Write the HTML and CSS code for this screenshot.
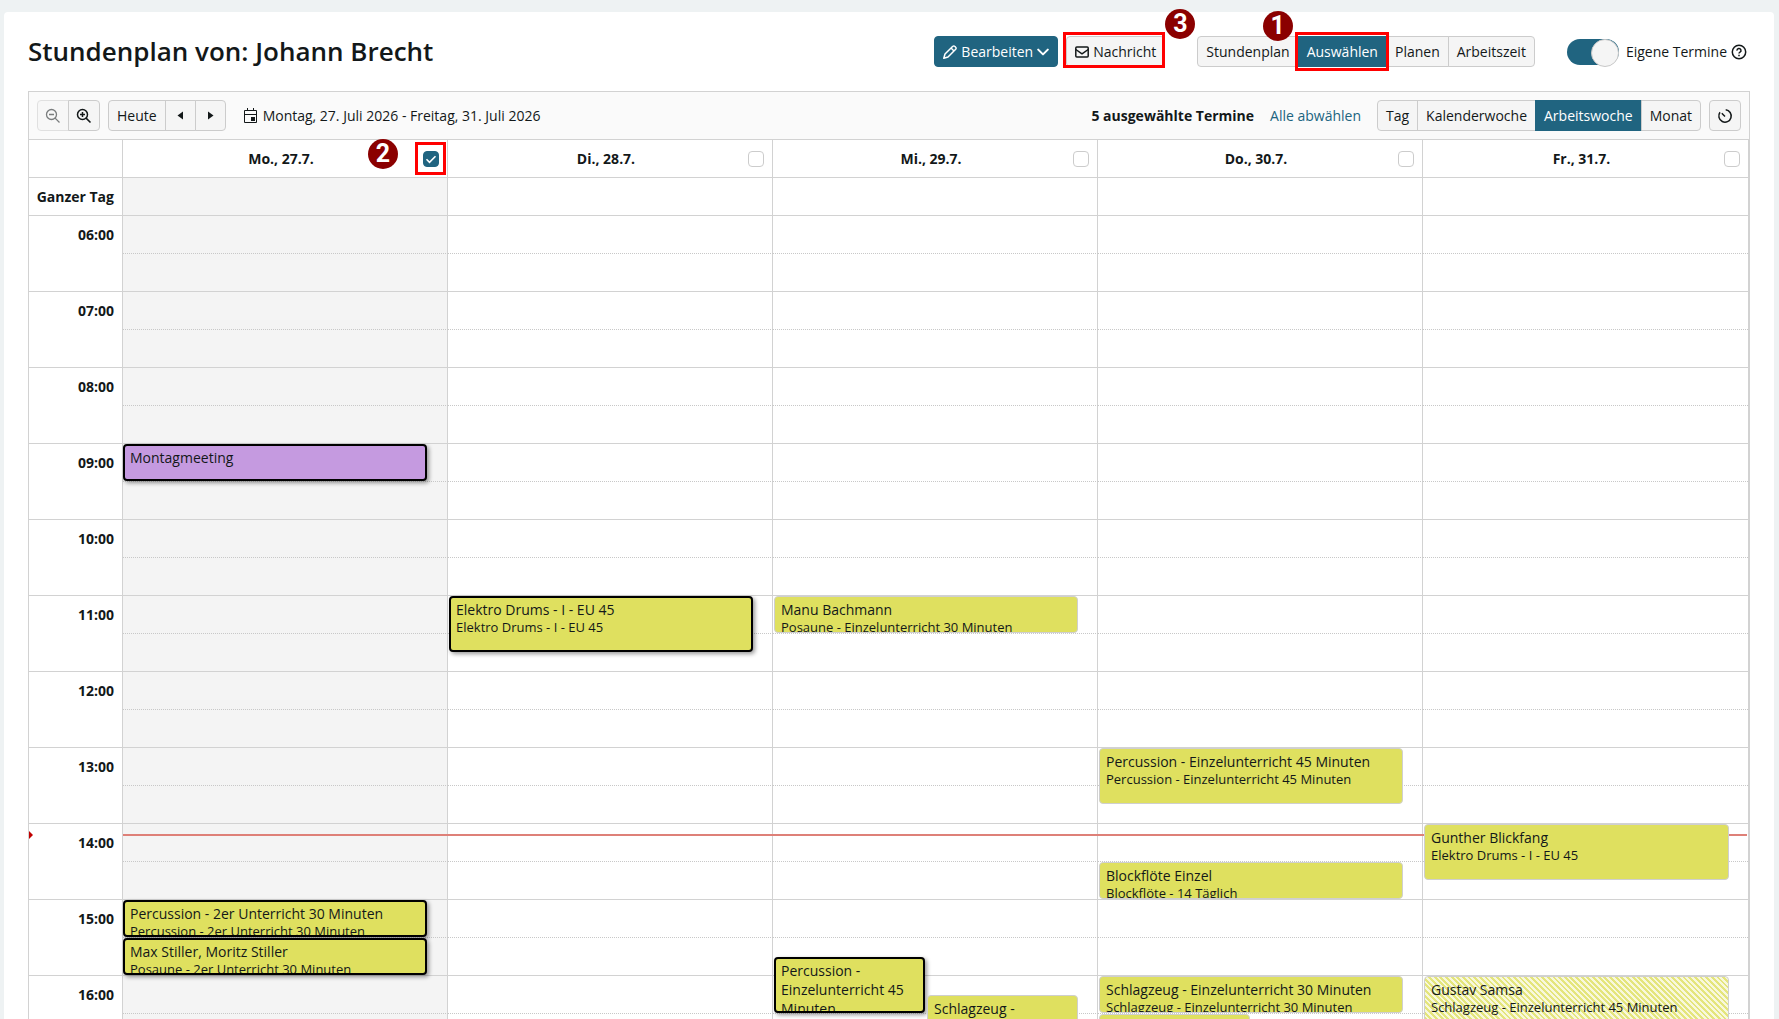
FILE: index.html
```html
<!DOCTYPE html>
<html lang="de">
<head>
<meta charset="utf-8">
<meta name="viewport" content="width=device-width, initial-scale=1">
<title>Stundenplan von: Johann Brecht</title>
<link rel="stylesheet" href="styles.css">
</head>
<body>
<main class="panel">
  <header class="page-head">
    <h1 class="title">Stundenplan von: Johann Brecht</h1>
    <div class="head-actions">
      <div class="action-pair">
        <button class="btn btn-primary" type="button">
          <svg class="icon-label" viewBox="1 1 14 14" fill="none" stroke="currentColor" stroke-width="1.500" stroke-linejoin="round"><path d="M1.800 14.200l1.200-4.200L10.800 2.300a1.300 1.300 0 0 1 1.900 0l1 1a1.300 1.300 0 0 1 0 1.900L6 13z"/><path d="M9.500 3.500l3 3-1 1-3-3z" fill="currentColor" stroke="none"/></svg>
          <span>Bearbeiten</span>
          <svg class="icon-caret" viewBox="1 1 10 10" fill="none" stroke="currentColor" stroke-width="1.700" stroke-linecap="round" stroke-linejoin="round"><path d="M2 4l4 4 4-4"/></svg>
        </button>
        <div class="marked mark-message">
          <button class="btn" type="button">
            <svg class="icon-label" viewBox="1 1 14 14" fill="none" stroke="currentColor" stroke-width="1.500" stroke-linejoin="round"><rect x="1.800" y="3" width="12.400" height="10" rx="1"/><path d="M1.800 5.500L8 9.800l6.200-4.300"/></svg>
            <span>Nachricht</span>
          </button>
          <span class="badge badge-right">3</span>
        </div>
      </div>
      <div class="group">
        <button class="btn" type="button">Stundenplan</button>
        <div class="marked mark-select">
          <button class="btn btn-primary" type="button">Auswählen</button>
          <span class="badge badge-left">1</span>
        </div>
        <button class="btn" type="button">Planen</button>
        <button class="btn" type="button">Arbeitszeit</button>
      </div>
      <div class="own">
        <input class="switch" type="checkbox" id="own" role="switch" checked>
        <label for="own">Eigene Termine</label>
        <svg class="icon" viewBox="0 0 16 16" fill="none" stroke="currentColor" stroke-width="1.500"><circle cx="8" cy="8" r="6.700"/><path d="M6 6.600a2 2 0 1 1 3 1.600c-.7.400-1 .7-1 1.300"/><path d="M8 10.700v1.500"/></svg>
      </div>
    </div>
  </header>

  <section class="calendar">
    <div class="toolbar">
      <div class="tool-left">
        <div class="group">
          <button class="btn btn-icon" type="button" aria-label="Verkleinern" disabled><svg class="icon" viewBox="0 0 16 16" fill="none" stroke="currentColor" stroke-width="1.300"><circle cx="6.500" cy="6.500" r="5"/><path d="M4 6.500h5M10.100 10.100l4.400 4.400"/></svg></button>
          <button class="btn btn-icon" type="button" aria-label="Vergrößern"><svg class="icon" viewBox="0 0 16 16" fill="none" stroke="currentColor" stroke-width="1.500"><circle cx="6.500" cy="6.500" r="5"/><path d="M4 6.500h5M6.500 4v5M10.100 10.100l4.400 4.400"/></svg></button>
        </div>
        <div class="group">
          <button class="btn" type="button">Heute</button>
          <button class="btn btn-icon" type="button" aria-label="Zurück"><svg class="icon-arrow" viewBox="0 0 15 15" fill="currentColor"><path d="M10 3.500v8L4.500 7.500z"/></svg></button>
          <button class="btn btn-icon" type="button" aria-label="Weiter"><svg class="icon-arrow" viewBox="0 0 15 15" fill="currentColor"><path d="M5 3.500v8l5.500-4z"/></svg></button>
        </div>
        <button class="range" type="button">
          <svg class="icon" viewBox="0 0 16 16" fill="none" stroke="currentColor"><path d="M1.500 2.500h12v12h-12zM1.500 6.500h12M4.500 0v3M10.500 0v3"/><path d="M9 9h3v4H8V9z" fill="currentColor" stroke="none"/></svg>
          <span>Montag, 27. Juli 2026 - Freitag, 31. Juli 2026</span>
        </button>
      </div>
      <div class="tool-right">
        <strong>5 ausgewählte Termine</strong>
        <a class="link" href="#">Alle abwählen</a>
        <div class="tool-views">
          <div class="group">
            <button class="btn" type="button">Tag</button>
            <button class="btn" type="button">Kalenderwoche</button>
            <button class="btn btn-primary" type="button">Arbeitswoche</button>
            <button class="btn" type="button">Monat</button>
          </div>
          <button class="btn btn-icon" type="button" aria-label="Arbeitszeit anzeigen"><svg class="icon" viewBox="0 0 16 16" fill="none" stroke="currentColor" stroke-width="1.500"><path d="M8.700 1.800A6.200 6.200 0 1 1 3 4.300M8 8.500L4.800 5.300"/></svg></button>
        </div>
      </div>
    </div>

    <div class="grid">
      <table class="week">
        <colgroup><col class="col-time"><col><col><col><col><col></colgroup>
        <thead>
          <tr>
            <td></td>
            <th scope="col"><div class="day-head"><label for="d1">Mo., 27.7.</label><span class="marked mark-day"><input class="check" type="checkbox" id="d1" checked><span class="badge badge-day">2</span></span></div></th>
            <th scope="col"><div class="day-head"><label for="d2">Di., 28.7.</label><input class="check" type="checkbox" id="d2"></div></th>
            <th scope="col"><div class="day-head"><label for="d3">Mi., 29.7.</label><input class="check" type="checkbox" id="d3"></div></th>
            <th scope="col"><div class="day-head"><label for="d4">Do., 30.7.</label><input class="check" type="checkbox" id="d4"></div></th>
            <th scope="col"><div class="day-head"><label for="d5">Fr., 31.7.</label><input class="check" type="checkbox" id="d5"></div></th>
          </tr>
        </thead>
        <tbody>
          <tr class="full"><th scope="row">Ganzer Tag</th><td class="picked"></td><td></td><td></td><td></td><td></td></tr>

          <tr class="half"><th scope="row" rowspan="2">06:00</th><td class="picked"></td><td></td><td></td><td></td><td></td></tr>
          <tr class="full"><td class="picked"></td><td></td><td></td><td></td><td></td></tr>

          <tr class="half"><th scope="row" rowspan="2">07:00</th><td class="picked"></td><td></td><td></td><td></td><td></td></tr>
          <tr class="full"><td class="picked"></td><td></td><td></td><td></td><td></td></tr>

          <tr class="half"><th scope="row" rowspan="2">08:00</th><td class="picked"></td><td></td><td></td><td></td><td></td></tr>
          <tr class="full"><td class="picked"></td><td></td><td></td><td></td><td></td></tr>

          <tr class="half"><th scope="row" rowspan="2">09:00</th><td class="picked"><article class="event len-30 meeting selected"><h2>Montagmeeting</h2></article></td><td></td><td></td><td></td><td></td></tr>
          <tr class="full"><td class="picked"></td><td></td><td></td><td></td><td></td></tr>

          <tr class="half"><th scope="row" rowspan="2">10:00</th><td class="picked"></td><td></td><td></td><td></td><td></td></tr>
          <tr class="full"><td class="picked"></td><td></td><td></td><td></td><td></td></tr>

          <tr class="half"><th scope="row" rowspan="2">11:00</th><td class="picked"></td>
            <td><article class="event len-45 selected"><h2>Elektro Drums - I - EU 45</h2><p>Elektro Drums - I - EU 45</p></article></td>
            <td><article class="event len-30"><h2>Manu Bachmann</h2><p>Posaune - Einzelunterricht 30 Minuten</p></article></td>
            <td></td><td></td></tr>
          <tr class="full"><td class="picked"></td><td></td><td></td><td></td><td></td></tr>

          <tr class="half"><th scope="row" rowspan="2">12:00</th><td class="picked"></td><td></td><td></td><td></td><td></td></tr>
          <tr class="full"><td class="picked"></td><td></td><td></td><td></td><td></td></tr>

          <tr class="half"><th scope="row" rowspan="2">13:00</th><td class="picked"></td><td></td><td></td>
            <td><article class="event len-45"><h2>Percussion - Einzelunterricht 45 Minuten</h2><p>Percussion - Einzelunterricht 45 Minuten</p></article></td>
            <td></td></tr>
          <tr class="full"><td class="picked"></td><td></td><td></td><td></td><td></td></tr>

          <tr class="half"><th scope="row" rowspan="2">14:00</th><td class="picked"></td><td></td><td></td><td></td>
            <td><article class="event len-45"><h2>Gunther Blickfang</h2><p>Elektro Drums - I - EU 45</p></article></td></tr>
          <tr class="full"><td class="picked"></td><td></td><td></td>
            <td><article class="event len-30"><h2>Blockflöte Einzel</h2><p>Blockflöte - 14 Täglich</p></article></td>
            <td></td></tr>

          <tr class="half"><th scope="row" rowspan="2">15:00</th>
            <td class="picked"><article class="event len-30 selected"><h2>Percussion - 2er Unterricht 30 Minuten</h2><p>Percussion - 2er Unterricht 30 Minuten</p></article></td>
            <td></td><td></td><td></td><td></td></tr>
          <tr class="full">
            <td class="picked"><article class="event len-30 selected"><h2>Max Stiller, Moritz Stiller</h2><p>Posaune - 2er Unterricht 30 Minuten</p></article></td>
            <td></td>
            <td><article class="event len-45 quarter lane-a selected"><h2>Percussion - Einzelunterricht 45 Minuten</h2></article></td>
            <td></td><td></td></tr>

          <tr class="half"><th scope="row" rowspan="2">16:00</th><td class="picked"></td><td></td>
            <td><article class="event len-45 quarter lane-b"><h2>Schlagzeug - Einzelunterricht 45 Minuten</h2></article></td>
            <td><article class="event len-30"><h2>Schlagzeug - Einzelunterricht 30 Minuten</h2><p>Schlagzeug - Einzelunterricht 30 Minuten</p></article></td>
            <td><article class="event len-45 striped"><h2>Gustav Samsa</h2><p>Schlagzeug - Einzelunterricht 45 Minuten</p></article></td></tr>
          <tr class="full"><td class="picked"></td><td></td><td></td>
            <td><article class="event len-30 lane-a"></article></td>
            <td></td></tr>
        </tbody>
      </table>
      <div class="now"></div>
    </div>
  </section>
</main>
</body>
</html>
```
FILE: styles.css
```css
:root {
  --ink: #131819;
  --teal: #206480;
  --line: #d2d2d2;
  --btn: #f5f5f5;
  --mark: #ff0000;
  --row: 38px;
}

* { box-sizing: border-box; }

body {
  margin: 0;
  height: 100vh;
  overflow: hidden;
  background: #eef2f3;
  color: var(--ink);
  font: 14px/20px "Open Sans", "Noto Sans", sans-serif;
}

button, input { font: inherit; color: inherit; margin: 0; }

.panel {
  margin: 12px 5px 0 4px;
  padding: 24px 24px 0;
  background: #fff;
  border-radius: 4px;
}

/* Page header */
.page-head {
  display: flex;
  justify-content: space-between;
  align-items: center;
  margin-bottom: 24px;
}

.title {
  margin: 0;
  font-size: 26px;
  line-height: 31px;
  font-weight: 600;
}

.head-actions { display: flex; align-items: center; gap: 32px; padding-right: 3px; }
.action-pair { display: flex; gap: 8px; }

.group { display: flex; }
.group > * + * { margin-left: -1px; }
.group > .btn { border-radius: 0; }
.group > .btn:first-child { border-radius: 4px 0 0 4px; }
.group > .btn:last-child { border-radius: 0 4px 4px 0; }
.group .marked .btn { border-radius: 0; }

.btn {
  display: flex;
  align-items: center;
  justify-content: center;
  gap: 4px;
  height: 31px;
  padding: 0 8px;
  border: 1px solid #cccccc;
  border-radius: 4px;
  background: var(--btn);
  white-space: nowrap;
}
.btn-primary { background: var(--teal); border-color: var(--teal); color: #fff; }
.btn-icon { padding: 0 7px; }
.btn:disabled { opacity: 0.55; }

.icon { width: 16px; height: 16px; flex: none; }
.icon-arrow { width: 15px; height: 15px; flex: none; }
.icon-label { width: 14px; height: 14px; flex: none; }
.icon-caret { width: 12px; height: 12px; flex: none; }

.own { display: flex; align-items: center; }
.own label { margin: 0 4px 0 7px; }

.switch {
  appearance: none;
  display: flex;
  justify-content: flex-end;
  width: 52px;
  height: 26px;
  border-radius: 13px;
  background: var(--teal);
}
.switch::before {
  content: "";
  width: 26px;
  height: 26px;
  border: 1px solid #c8c8c8;
  border-radius: 50%;
  background: var(--btn);
}

/* Numbered red markers around controls */
.marked { position: relative; }
.marked::after {
  content: "";
  position: absolute;
  z-index: 2;
  border: 3px solid var(--mark);
  pointer-events: none;
}
.mark-message::after { inset: -4px 0 -1px -3px; }
.mark-select::after { inset: -4px -2px -4px -3px; }
.mark-day::after { inset: -9px -7px -8px -8px; }

.badge {
  position: absolute;
  z-index: 3;
  width: 30px;
  height: 30px;
  border-radius: 50%;
  background: #8b0000;
  color: #fff;
  font: bold 25px/30px Roboto, sans-serif;
  text-align: center;
}
.badge-right { top: -27px; right: -30px; }
.badge-left { top: -25px; left: -35px; }
.badge-day { top: -12px; left: -55px; }

/* Calendar */
.calendar { border: 1px solid var(--line); }

.toolbar {
  display: flex;
  justify-content: space-between;
  padding: 8px;
  border-bottom: 1px solid var(--line);
  background: #fafafa;
}
.tool-left, .tool-right, .tool-views { display: flex; align-items: center; }
.tool-left, .tool-views { gap: 8px; }
.tool-right { gap: 16px; }

.range {
  display: flex;
  align-items: center;
  gap: 4px;
  margin-left: 9px;
  padding: 0;
  border: 0;
  background: none;
}

.link { color: var(--teal); text-decoration: none; }

.grid { position: relative; border-right: 1px solid var(--line); }

.week {
  width: 100%;
  table-layout: fixed;
  border-collapse: separate;
  border-spacing: 0;
}
.col-time { width: 94px; }

.week th, .week td {
  position: relative;
  height: var(--row);
  padding: 0;
  border: 0 solid var(--line);
  border-width: 0 1px 1px 0;
}
.week th:last-child, .week td:last-child { border-right: 0; }
.week tbody th {
  padding: 9px 8px 0 0;
  text-align: right;
  vertical-align: top;
  font-weight: 700;
  line-height: 20px;
}
.week .half td { border-bottom-style: dotted; border-bottom-color: #c8c8c8; }
.week .picked { background: #f4f4f4; }

.day-head {
  display: grid;
  grid-template-columns: 1fr auto 1fr;
  align-items: center;
  padding-right: 8px;
}
.day-head label { grid-column: 2; }
.day-head > :last-child { justify-self: end; }

.check {
  appearance: none;
  display: block;
  width: 16px;
  height: 16px;
  border: 1px solid #cccccc;
  border-radius: 4px;
  background: #fff;
}
.check:checked {
  border-color: var(--teal);
  background: var(--teal) url("data:image/svg+xml,%3Csvg xmlns='http://www.w3.org/2000/svg' viewBox='0 0 14 14' fill='none' stroke='white' stroke-width='1.600'%3E%3Cpath d='M2.500 7.300l3 3 6-6'/%3E%3C/svg%3E") center / 14px no-repeat;
}

/* Events: one pixel short of the slot so the grid line stays visible */
.event {
  position: absolute;
  z-index: 1;
  top: 0;
  left: 1px;
  right: 19px;
  overflow: hidden;
  padding: 3px 6px;
  border: 1px solid #cfcfcf;
  border-radius: 4px;
  background: #dfe05f;
}
.picked .event { left: 0; right: 20px; }
.len-30 { height: 37px; }
.len-45 { height: 56px; }
.quarter { top: 19px; }
.lane-a { right: 50%; margin-right: 10px; }
.lane-b { left: 50%; margin-left: -8px; }

.event h2, .event p { margin: 0; font-weight: 400; }
.event h2 { font-size: 14px; line-height: 19px; }
.event p { font-size: 13px; line-height: 16px; white-space: nowrap; }

.selected {
  padding: 2px 5px;
  border: 2px solid #000;
  box-shadow: 2px 2px 4px rgba(0, 0, 0, 0.4);
}
.meeting { background: #c59ae0; }
.striped { background: repeating-linear-gradient(45deg, #e4e57c 0 2px, #f8f8dc 2px 4px); }

/* Current time: 38px header, 38px all-day row, then 76px per hour */
.now {
  position: absolute;
  top: 694px;
  left: 94px;
  right: 1px;
  height: 2px;
  background: #de8078;
}
.now::before {
  content: "";
  position: absolute;
  top: -3px;
  left: -94px;
  border: 4px solid transparent;
  border-left-color: #c00000;
  border-right-width: 0;
}
```
